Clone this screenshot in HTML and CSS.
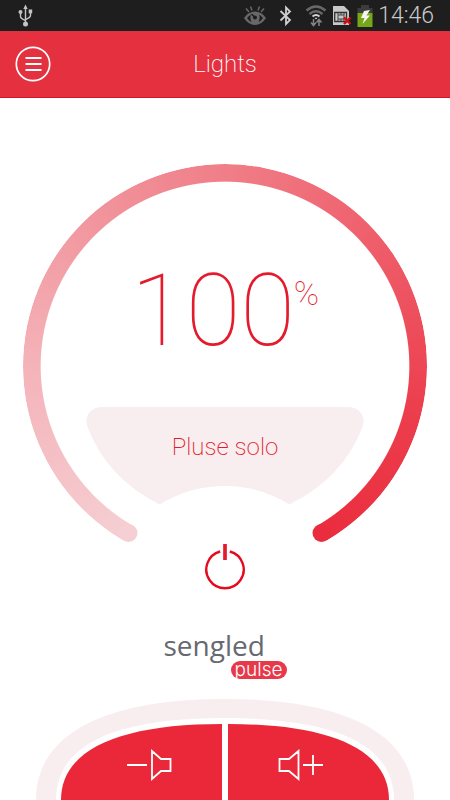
FILE: index.html
```html
<!DOCTYPE html>
<html lang="en">
<head>
<meta charset="utf-8">
<meta name="viewport" content="width=device-width, initial-scale=1">
<title>Lights</title>
<link rel="stylesheet" href="styles.css">
</head>
<body>
<div class="status">
  <svg class="status-usb" width="16" height="24" viewBox="0 0 16 24" aria-hidden="true">
    <g fill="none" stroke="#c4c4c4" stroke-width="1.4"><path d="M7.500 4V20M2.500 8V12.500Q2.500 14.500 7.500 16.500M12.500 8V11.500Q12.500 13.500 7.500 15.500"/></g>
    <g fill="#c4c4c4"><path d="M7.500 .5L9.700 5H5.300Z"/><circle cx="2.500" cy="8" r="2"/><path d="M10.700 5.500h3.500v3.800h-3.500z"/><circle cx="7.500" cy="20" r="2.500"/></g>
  </svg>
  <div class="status-right">
    <div class="status-group">
      <svg width="24" height="22" viewBox="0 0 24 22" aria-hidden="true">
        <g fill="none" stroke="#686868" stroke-width="1.500"><path d="M3 3.500L6 7M7.500 1.500L9 5.500M16.500 1.500L15 5.500M21 3.500L18 7"/></g>
        <path fill="#686868" d="M1 13Q5.500 6.500 12 6.500T23 13Q18.500 20 12 20T1 13Z"/>
        <path fill="#1e1e1e" d="M4 13Q6 10.500 8 9.500Q6.500 13 8.500 17Q6 16 4 13ZM20 13Q18 10.500 16 9.500Q17.500 13 15.500 17Q18 16 20 13Z"/>
        <circle cx="12" cy="12.500" r="2" fill="#1e1e1e"/><path d="M8.500 9L12 12.500" stroke="#1e1e1e" stroke-width="1.500"/>
      </svg>
      <svg width="14" height="22" viewBox="0 0 14 22" aria-hidden="true"><path d="M1.500 6L11 15L7 19V2.500L11 6.500L1.500 15.500" fill="none" stroke="#cfcfcf" stroke-width="1.800"/></svg>
      <svg width="22" height="24" viewBox="0 0 22 24" aria-hidden="true">
        <g fill="none" stroke="#686868" stroke-width="2.400"><path d="M1.500 6.500Q11-1.500 20.500 6.500M4.500 10Q11 4.500 17.500 10"/></g>
        <path d="M7.500 12.500Q11 9.500 14.500 12.500" fill="none" stroke="#d4d4d4" stroke-width="2"/>
        <path d="M9.500 13.800H12.500L11 15.500Z" fill="#d4d4d4"/>
        <path d="M8.500 15V21M6 18.500L8.500 21.500L11 18.500M14 22V16M11.500 18.500L14 15.500L16.500 18.500" fill="none" stroke="#858585" stroke-width="1.500"/>
      </svg>
    </div>
    <svg width="20" height="22" viewBox="0 0 20 22" aria-hidden="true">
      <path d="M1 1H12L17 6V20H1Z" fill="#c8c8c8"/>
      <path d="M2.700 7.500H14.500V16.500H2.700Z" fill="none" stroke="#333" stroke-width="1.300"/>
      <path d="M6 10h6v4H6zM6 8v2M9 8v2M12 8v2M6 14v2M9 14v2M12 14v2" fill="none" stroke="#444"/>
      <path d="M12 12.500L18.500 19M18.500 12.500L12 19" stroke="#d20a10" stroke-width="2.400"/>
    </svg>
    <svg width="16" height="24" viewBox="0 0 16 24" aria-hidden="true">
      <path d="M4 1H12V4H15.500V9H.5V4H4Z" fill="#3c3c3c"/><path d="M.5 9H15.500V23H.5Z" fill="#77a619"/>
      <path d="M7 7L13 6L9.500 11.500H13L5.500 20L7.500 14H4Z" fill="#f4f4f4"/>
    </svg>
    <time class="clock">14:46</time>
  </div>
</div>

<header class="bar">
  <button class="menu" type="button" aria-label="Menu">
    <svg width="36" height="36" viewBox="0 0 36 36" aria-hidden="true"><g fill="none" stroke="#fff" stroke-width="1.700"><circle cx="18" cy="18" r="16.700"/><path d="M10.500 12H26.500M10.500 18H26.500M10.500 24H26.500" stroke-width="2"/></g></svg>
  </button>
  <h1 class="title">Lights</h1>
</header>

<main class="main">
  <section class="dial" aria-label="Brightness">
    <div class="ring"></div>
    <svg class="ring-caps" viewBox="0 0 404 404" aria-hidden="true"><circle cx="105.500" cy="369" r="9" fill="#f5cfd3"/><circle cx="298.500" cy="369" r="9" fill="#ea2d3e"/></svg>
    <p class="level">100<span class="percent">%</span></p>
    <button class="mode" type="button">
      <svg class="mode-shape" viewBox="87 407 278 98" aria-hidden="true"><path fill="#f8edef" d="M103 407H349C360 407 367.500 416 363.500 427Q344 478 290.500 504.500Q261 486 226 486T160.500 504.500Q108 478 88.500 427C84.500 416 92 407 103 407Z"/></svg>
      <span class="mode-name">Pluse solo</span>
    </button>
  </section>

  <button class="power" type="button" aria-label="Power">
    <svg width="42" height="48" viewBox="0 0 42 48" aria-hidden="true"><path d="M16.200 8.500A18.700 18.700 0 1 0 25.800 8.500" fill="none" stroke="#e60a1e" stroke-width="2.400"/><path d="M21 1V17" stroke="#e31b2c" stroke-width="3.700"/></svg>
  </button>

  <div class="brand">
    <span class="brand-name">sengled</span>
    <span class="brand-tag">pulse</span>
  </div>
</main>

<footer class="volume">
  <svg class="volume-shape" viewBox="36 699 378 101" aria-hidden="true">
    <path fill="#f8edef" d="M36 800C36 732 108 699 225 699S414 732 414 800Z"/>
    <path fill="#fff" d="M56 800C56 741 122 718 225 718S394 741 394 800Z"/>
    <path fill="#ea2839" d="M61 800C61 747 125 724 222 724V800Z"/>
    <path fill="#ea2839" d="M389 800C389 747 325 724 228 724V800Z"/>
  </svg>
  <button class="vol vol-down" type="button" aria-label="Volume down">
    <svg width="46" height="32" viewBox="0 0 46 32" aria-hidden="true"><path d="M1 16H21M26 2V30L35 22H44.500V10H35Z" fill="none" stroke="#fff" stroke-width="1.800"/></svg>
  </button>
  <button class="vol vol-up" type="button" aria-label="Volume up">
    <svg width="46" height="32" viewBox="0 0 46 32" aria-hidden="true"><path d="M20.500 2V30L11 22H1.500V10H11ZM25 16H45M35 6V26" fill="none" stroke="#fff" stroke-width="1.800"/></svg>
  </button>
</footer>
</body>
</html>
```
FILE: styles.css
```css
* { box-sizing: border-box; }
body {
  margin: 0;
  min-height: 100vh;
  display: flex;
  flex-direction: column;
  background: #fff;
  font-family: Roboto, "Liberation Sans", sans-serif;
}
button {
  border: 0;
  padding: 0;
  background: none;
  color: inherit;
  font: inherit;
  cursor: pointer;
}
svg { display: block; }
h1, p { margin: 0; }

.status {
  height: 31px;
  padding: 0 16px 0 18px;
  display: flex;
  align-items: center;
  justify-content: space-between;
  background: #1e1e1e;
}
.status-right { display: flex; align-items: center; gap: 5px; }
.status-group { display: flex; align-items: center; gap: 12px; }
.clock {
  color: #c8c8c8;
  font-size: 23px;
  line-height: 32px;
  font-weight: 300;
}

.bar {
  height: 67px;
  padding: 0 15px;
  display: grid;
  grid-template-columns: 36px 1fr 36px;
  align-items: center;
  background: #e4303f;
  border-bottom: 1px solid #d0142a;
}
.title {
  color: #fff;
  font-size: 24px;
  line-height: 32px;
  font-weight: 200;
  text-align: center;
}

.main {
  flex: 1;
  padding: 66px 23px 0;
  display: flex;
  flex-direction: column;
  align-items: center;
}
.dial {
  position: relative;
  width: 100%;
  max-width: 404px;
  aspect-ratio: 404 / 378;
  padding-top: 97px;
  display: flex;
  flex-direction: column;
  align-items: center;
}
.ring, .ring-caps {
  position: absolute;
  top: 0;
  left: 0;
  width: 100%;
  aspect-ratio: 1;
}
.ring {
  border-radius: 50%;
  background: conic-gradient(from 210deg, #f5cfd3 0deg, #f4b3b9 60deg, #f1949c 110deg, #f07e88 150deg, #ee5865 210deg, #ec3d4c 255deg, #ea2d3e 300deg, transparent 300deg);
  mask: radial-gradient(closest-side, transparent 91%, #000 91.5%);
}
.level {
  position: relative;
  padding-right: 24px;
  color: #e31b2c;
  font-size: 100px;
  line-height: 100px;
  font-weight: 100;
}
.percent {
  position: absolute;
  right: 0;
  top: 16px;
  font-size: 34px;
  line-height: 32px;
  font-weight: 100;
}
.mode {
  position: relative;
  width: 278px;
  height: 98px;
  margin-top: 46px;
}
.mode-shape { width: 100%; height: 100%; }
.mode-name {
  position: absolute;
  inset: 24px 0 auto;
  color: #e31b2c;
  font-size: 24px;
  line-height: 32px;
  font-weight: 200;
}
.power { margin-top: 1px; }

.brand {
  margin-top: 42px;
  width: 123px;
  display: flex;
  flex-direction: column;
}
.brand-name {
  color: #666970;
  font-family: "Open Sans", sans-serif;
  font-size: 28px;
  line-height: 24px;
}
.brand-tag {
  align-self: flex-end;
  margin-top: 4px;
  padding: 0 4px;
  border-radius: 9px;
  background: #e8394a;
  color: #fff;
  font-family: Inter, sans-serif;
  font-weight: 300;
  font-size: 19px;
  line-height: 18px;
}

.volume {
  position: relative;
  width: 84%;
  max-width: 378px;
  margin: 0 auto;
  padding-top: 25px;
  display: grid;
  grid-template-columns: 1fr 1fr;
  column-gap: 6px;
}
.volume-shape { position: absolute; inset: 0; width: 100%; height: 100%; }
.vol {
  position: relative;
  height: 76px;
  display: flex;
  align-items: center;
  padding: 6px 0 0;
}
.vol-down { justify-content: flex-end; padding-right: 50px; }
.vol-up { padding-left: 50px; }
```
